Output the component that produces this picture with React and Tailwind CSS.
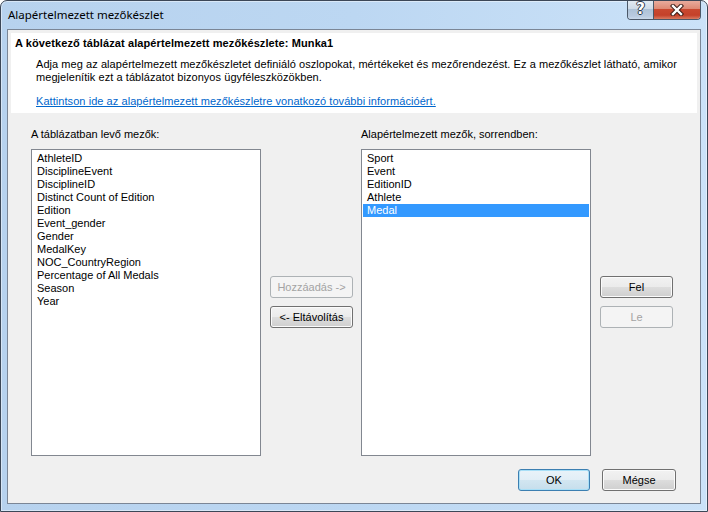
import React from "react";

const available = [
  "AthleteID",
  "DisciplineEvent",
  "DisciplineID",
  "Distinct Count of Edition",
  "Edition",
  "Event_gender",
  "Gender",
  "MedalKey",
  "NOC_CountryRegion",
  "Percentage of All Medals",
  "Season",
  "Year",
];

const chosen = ["Sport", "Event", "EditionID", "Athlete", "Medal"];

const baseBtn =
  "h-[22px] rounded-[3px] border text-[11px] leading-none flex items-center justify-center";
const normalBtn =
  "border-[#707070] text-black bg-[linear-gradient(#f2f2f2_0%,#ebebeb_50%,#dddddd_51%,#cfcfcf_100%)] shadow-[inset_0_0_0_1px_#fbfbfb]";
const disabledBtn = "border-[#adb2b5] text-[#a3a3a3] bg-[#f4f4f4]";
const defaultBtn =
  "border-[#3c7fb1] text-black bg-[linear-gradient(#e9f3f9_0%,#e1eef6_50%,#d2e6f1_51%,#c6deec_100%)] shadow-[inset_0_0_0_1px_#a8dff7]";

function Button({ children, kind = "normal", className = "" }) {
  const style =
    kind === "disabled" ? disabledBtn : kind === "default" ? defaultBtn : normalBtn;
  return <div className={`${baseBtn} ${style} ${className}`}>{children}</div>;
}

function ListBox({ items, selected }) {
  return (
    <div className="w-[230px] h-[307px] border border-[#828790] bg-white pt-[2px] px-px">
      {items.map((item) => (
        <div
          key={item}
          className={`h-[13px] leading-[13px] pl-[4px] text-[11px] whitespace-nowrap ${
            item === selected ? "bg-[#3399ff] text-white" : "text-black"
          }`}
        >
          {item}
        </div>
      ))}
    </div>
  );
}

function CaptionButtons() {
  return (
    <div className="self-start -mt-px mr-[6px] flex h-[20px] border border-t-0 border-[#4b5868] rounded-b-[4px] overflow-hidden">
      <div className="w-[26px] flex items-center justify-center border-r border-[#4b5868] bg-[linear-gradient(#e3ebf3_0%,#cfdbe8_45%,#aec2d7_50%,#b9cbe0_85%,#c9d9ea_100%)]">
        <span className="text-[15px] font-bold text-white leading-none font-['DejaVu_Sans'] [text-shadow:1px_0_0_#2a3646,-1px_0_0_#2a3646,0_1px_0_#2a3646,0_-1px_0_#2a3646]">
          ?
        </span>
      </div>
      <div className="w-[46px] flex items-center justify-center bg-[linear-gradient(#eab0a2_0%,#de8a75_45%,#c9482f_50%,#c4412a_80%,#d97a60_100%)]">
        <svg width="14" height="12" viewBox="0 0 14 12">
          <path d="M3 2 L11 10 M11 2 L3 10" stroke="#3a1c16" strokeWidth="4.4" strokeLinecap="square" />
          <path d="M3 2 L11 10 M11 2 L3 10" stroke="#ffffff" strokeWidth="2.4" strokeLinecap="square" />
        </svg>
      </div>
    </div>
  );
}

export default function App() {
  return (
    <div className="w-[708px] h-[512px] flex flex-col rounded-t-[7px] border border-[#3c4757] bg-[linear-gradient(90deg,#b7d2ee_0%,#bcd7f2_50%,#cbe2f8_100%)] font-['Liberation_Sans',Arial,sans-serif] shadow-[inset_0_0_0_1px_rgba(255,255,255,0.45)] overflow-hidden">
      {/* title bar */}
      <div className="h-[28px] shrink-0 flex justify-between">
        <div className="pl-[7px] flex items-center text-[11.5px] text-black font-['Noto_Sans',sans-serif]">
          Alapértelmezett mezőkészlet
        </div>
        <CaptionButtons />
      </div>

      {/* client area */}
      <div className="flex-1 mx-[6px] mb-[7px] border border-[#7b8696] bg-[#f0f0f0] flex flex-col text-[11px] text-black">
        {/* description panel */}
        <div className="m-[3px] h-[80px] bg-white pl-[4px] pt-[4px]">
          <div className="font-bold leading-[13px] tracking-[0.1px] whitespace-nowrap">
            A következő táblázat alapértelmezett mezőkészlete: Munka1
          </div>
          <div className="pl-[21px] mt-[8px] leading-[13px] tracking-[0.06px] whitespace-nowrap">
            Adja meg az alapértelmezett mezőkészletet definiáló oszlopokat, mértékeket és mezőrendezést. Ez a mezőkészlet látható, amikor
            <br />
            megjelenítik ezt a táblázatot bizonyos ügyféleszközökben.
          </div>
          <div className="pl-[21px] mt-[11px] leading-[13px] tracking-[0.06px] text-[#0066cc] underline whitespace-nowrap">
            Kattintson ide az alapértelmezett mezőkészletre vonatkozó további információért.
          </div>
        </div>

        {/* field lists */}
        <div className="mt-[12px] pl-[23px] flex">
          <div className="flex flex-col">
            <div className="h-[13px] leading-[13px]">A táblázatban levő mezők:</div>
            <div className="mt-[8px]">
              <ListBox items={available} />
            </div>
          </div>

          <div className="ml-[9px] pt-[148px] flex flex-col gap-[8px]">
            <Button kind="disabled" className="w-[83px]">
              Hozzáadás -&gt;
            </Button>
            <Button className="w-[83px]">&lt;- Eltávolítás</Button>
          </div>

          <div className="ml-[8px] flex flex-col">
            <div className="h-[13px] leading-[13px]">Alapértelmezett mezők, sorrendben:</div>
            <div className="mt-[8px]">
              <ListBox items={chosen} selected="Medal" />
            </div>
          </div>

          <div className="ml-[9px] pt-[148px] flex flex-col gap-[8px]">
            <Button className="w-[73px]">Fel</Button>
            <Button kind="disabled" className="w-[73px]">
              Le
            </Button>
          </div>
        </div>

        {/* dialog buttons */}
        <div className="mt-[13px] pr-[24px] flex justify-end gap-[12px]">
          <Button kind="default" className="w-[72px]">
            OK
          </Button>
          <Button className="w-[74px]">Mégse</Button>
        </div>
      </div>
    </div>
  );
}
